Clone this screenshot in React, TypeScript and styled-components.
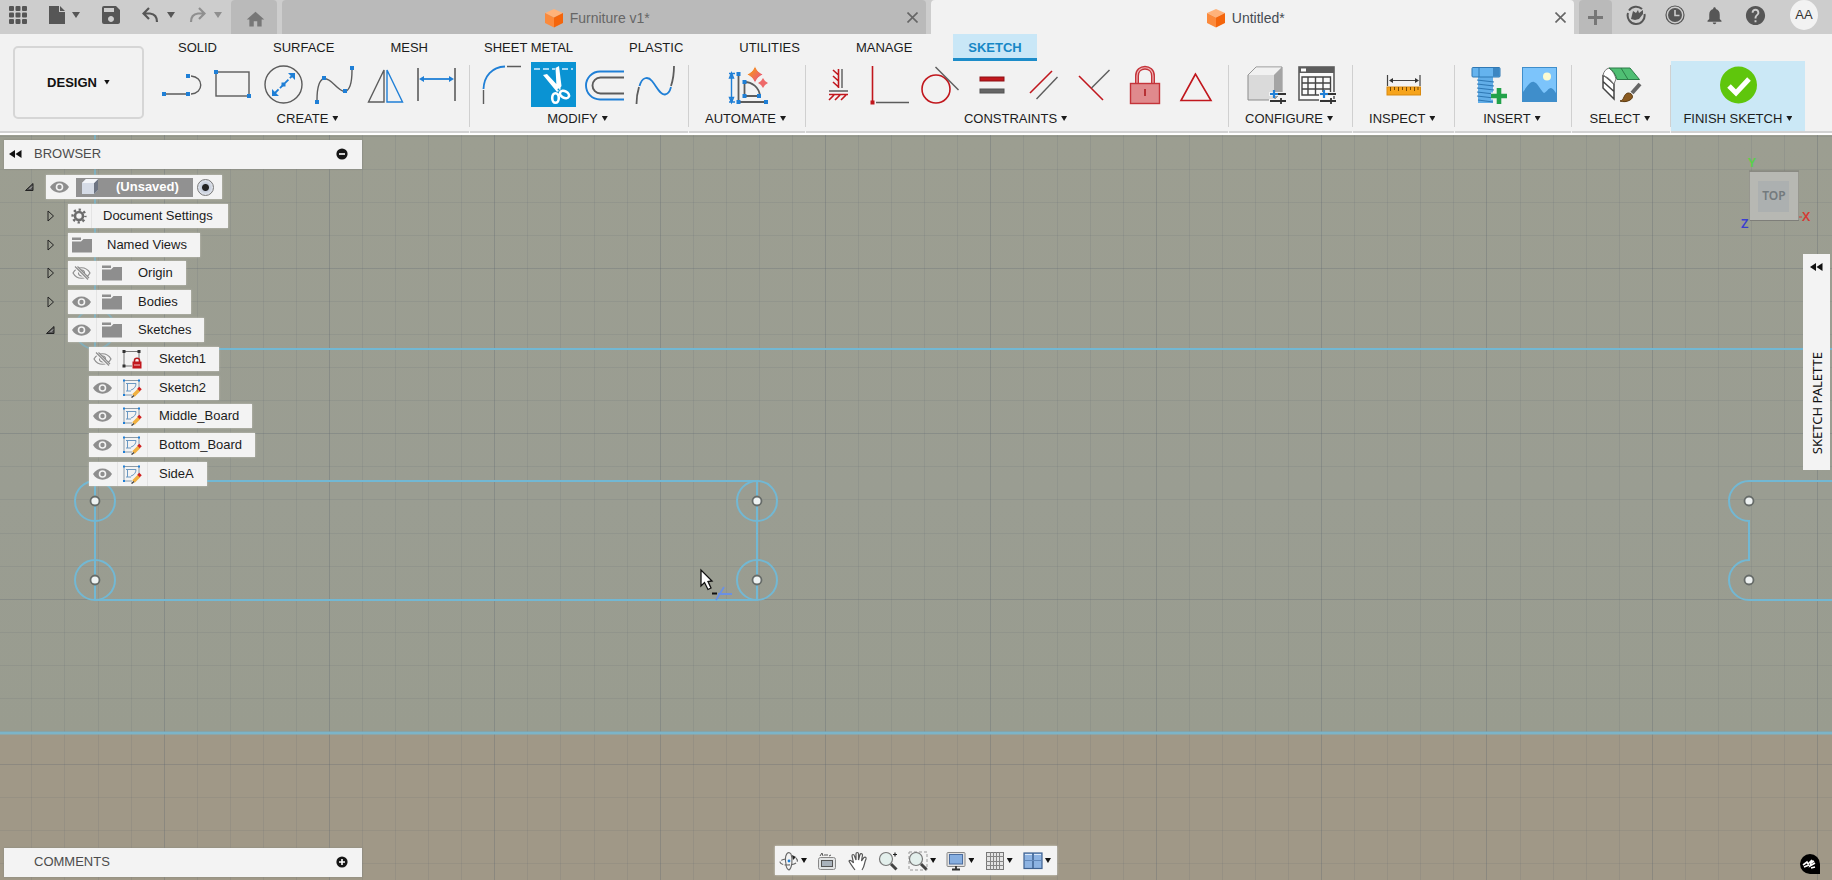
import React from "react";
import styled, { createGlobalStyle, css } from "styled-components";
import { MdHome, MdSave, MdNotifications, MdHelp } from "react-icons/md";

const GlobalStyle = createGlobalStyle`
  *, *::before, *::after { box-sizing: border-box; }
  body {
    margin: 0;
    font-family: "Liberation Sans", Arial, sans-serif;
    font-size: 13px;
    line-height: 16px;
    color: #1c1c1c;
    background: #f2f2f2;
  }
  ul { list-style: none; margin: 0; padding: 0; }
  button { font: inherit; color: inherit; background: none; border: 0; padding: 0; cursor: pointer; }
`;

const BLUE = "#1f7fd6";
const RED = "#c1171d";
const GRAY = "#5c5c5c";

/* ---------- page frame ---------- */

const Page = styled.div`
  display: flex;
  flex-direction: column;
  min-height: 100vh;
`;

const TopBar = styled.header`
  display: flex;
  height: 34px;
  background: #cdcdcd;
  color: #5b5b5b;
`;

const QuickActions = styled.div`
  display: flex;
  align-items: center;
  gap: 22px;
  width: 231px;
  padding: 0 0 4px 8px;
`;

const History = styled.div`
  display: flex;
  gap: 14px;
`;

const QuickButton = styled.button<{ $muted?: boolean }>`
  display: flex;
  align-items: center;
  gap: 6px;
  color: ${(p) => (p.$muted ? "#8f8f8f" : "#565656")};
  svg { display: block; }
`;

const TabStrip = styled.nav`
  display: flex;
  flex: 1;
  gap: 5px;
`;

const HomeTab = styled.button`
  display: flex;
  align-items: center;
  justify-content: center;
  width: 46px;
  padding: 4px 0 0 3px;
  border-radius: 4px 4px 0 0;
  background: #bababa;
  color: #777;
`;

const DocTab = styled.div<{ $active?: boolean }>`
  display: flex;
  flex: 1;
  align-items: center;
  padding: 0 8px 0 6px;
  border-radius: 4px 4px 0 0;
  background: ${(p) => (p.$active ? "#f2f2f2" : "#bababa")};
  color: ${(p) => (p.$active ? "#454b52" : "#666")};
  font-size: 14px;
`;

const DocTitle = styled.button`
  display: flex;
  flex: 1;
  align-items: center;
  justify-content: center;
  gap: 7px;
  padding-top: 2px;
`;

const CloseButton = styled.button`
  display: flex;
  width: 11px;
  height: 11px;
  color: #666;
`;

const AddTab = styled.button`
  display: flex;
  align-items: center;
  justify-content: center;
  width: 33px;
  border-radius: 4px 4px 0 0;
  background: #bababa;
  color: #777;
`;

const AccountBar = styled.div`
  display: flex;
  align-items: center;
  gap: 19px;
  width: 220px;
  padding: 0 14px 4px;
`;

const Avatar = styled.button`
  width: 30px;
  height: 30px;
  margin-left: 4px;
  border-radius: 50%;
  background: #f2f2f2;
  color: #333;
`;

/* ---------- ribbon ---------- */

const Ribbon = styled.section`
  display: flex;
  height: 101px;
  padding-left: 13px;
  background: #f2f2f2;
  border-bottom: 2px solid #fff;
  box-shadow: inset 0 -2px 0 #d2d2d2;
`;

const WorkspaceButton = styled.button`
  width: 131px;
  height: 73px;
  margin-top: 12px;
  border: 2px solid #d6d6d6;
  border-radius: 5px;
  font-weight: bold;
  color: #111;
`;

const RibbonBody = styled.div`
  display: flex;
  flex-direction: column;
  flex: 1;
  padding-left: 5px;
`;

const RibbonTabs = styled.nav`
  display: flex;
  gap: 26px;
  height: 27px;
  padding-left: 14px;
`;

const RibbonTab = styled.button<{ $active?: boolean }>`
  padding: 0 15px;
  white-space: nowrap;
  ${(p) =>
    p.$active &&
    css`
      background: #c9e7f7;
      box-shadow: inset 0 -3px 0 #1c8cc9;
      color: #1787c6;
      font-weight: bold;
    `}
`;

const ToolGroups = styled.div`
  display: flex;
  flex: 1;
`;

const Group = styled.div<{ $highlight?: boolean }>`
  display: flex;
  flex-direction: column;
  align-items: center;
  min-width: 99px;
  padding-top: 1px;
  ${(p) =>
    p.$highlight
      ? css`
          margin-bottom: 2px;
          background: #cbe8f6;
        `
      : css`
          border-right: 1px solid transparent;
          border-image: linear-gradient(#f2f2f2 5px, #d0d0d0 5px, #d0d0d0 65px, #f2f2f2 65px) 1;
        `}
`;

const GroupTools = styled.div`
  display: flex;
  padding: 0 7px;
`;

const Tool = styled.button<{ $active?: boolean }>`
  width: 45px;
  height: 45px;
  margin: 0 3px;
  background: ${(p) => (p.$active ? "#0a93d3" : "none")};
  svg { display: block; }
`;

const GroupLabel = styled.button<{ $tight?: boolean }>`
  padding: ${(p) => (p.$tight ? "4px 13px 0 12px" : "4px 19px 0 16px")};
  white-space: nowrap;
`;

const Caret = styled.span<{ $gap?: number; $large?: boolean }>`
  display: inline-block;
  width: ${(p) => (p.$large ? 8 : 6)}px;
  height: ${(p) => (p.$large ? 6 : 5)}px;
  margin-left: ${(p) => p.$gap ?? 4}px;
  vertical-align: 2px;
  background: currentColor;
  clip-path: polygon(0 0, 100% 0, 50% 100%);
`;

/* ---------- canvas ---------- */

const Stage = styled.main`
  position: relative;
  flex: 1;
  min-height: 500px;
  overflow: hidden;
  background: #9c9e90;
`;

const Drawing = styled.svg`
  position: absolute;
  inset: 0;
  width: 100%;
  height: 100%;
`;

const Panel = styled.section`
  position: absolute;
  left: 4px;
  width: 358px;
`;

const BrowserPanel = styled(Panel)`
  top: 5px;
`;

const CommentsPanel = styled(Panel)`
  bottom: 3px;
`;

const PanelHeader = styled.div`
  display: flex;
  align-items: center;
  height: 29px;
  padding: 0 14px 1px 5px;
  background: #f3f3f3;
  box-shadow: 0 0 2px #8a8a80;
  color: #4c4c4c;
  h2 { flex: 1; margin: 0; font-size: 13px; font-weight: normal; }
  svg { display: block; }
`;

const HeaderSlot = styled.span`
  width: 25px;
`;

const Tree = styled.ul`
  display: grid;
  grid-auto-rows: 1fr;
  height: 315px;
  margin-top: 4px;
`;

const levelIndent = [20, 41, 41];

const TreeItem = styled.li<{ $level: number }>`
  display: flex;
  align-items: center;
  padding-left: ${(p) => levelIndent[p.$level]}px;
`;

const Expander = styled.span<{ $level: number }>`
  display: flex;
  width: ${(p) => (p.$level === 2 ? 44 : p.$level === 1 ? 23 : 22)}px;
`;

const TreeBox = styled.div<{ $end: number }>`
  display: flex;
  align-items: center;
  height: 24px;
  padding-right: ${(p) => p.$end}px;
  background: #f3f3f3;
  box-shadow: 0 0 2px #c4c4bc;
  white-space: nowrap;
`;

const TreeCell = styled.button<{ $w: number; $line?: boolean }>`
  display: flex;
  align-items: center;
  justify-content: center;
  width: ${(p) => p.$w}px;
  height: 24px;
  padding-right: 1px;
  border-right: ${(p) => (p.$line ? "1px solid #e4e4e4" : "0")};
  svg { display: block; }
`;

const TreeText = styled.span<{ $gap: number }>`
  padding-left: ${(p) => p.$gap}px;
`;

const RootName = styled.span`
  display: flex;
  align-items: center;
  gap: 18px;
  height: 19px;
  margin: 0 4px 0 3px;
  padding: 0 14px 0 6px;
  background: #919191;
  color: #fff;
  font-weight: bold;
`;

const ActiveRadio = styled.input`
  appearance: none;
  width: 17px;
  height: 17px;
  margin: 0;
  border: 1px solid #777;
  border-radius: 50%;
  background: radial-gradient(circle, #222 0 3px, #c3cbd9 4px, #e6e9ef 8px);
`;

const ViewCube = styled.svg`
  position: absolute;
  top: 15px;
  right: 16px;
  width: 80px;
  height: 90px;
`;

const Palette = styled.button`
  position: absolute;
  top: 119px;
  right: 2px;
  display: flex;
  flex-direction: column;
  align-items: center;
  justify-content: space-between;
  width: 27px;
  height: 216px;
  padding: 9px 0 16px;
  background: #f3f3f3;
`;

const PaletteText = styled.span`
  writing-mode: vertical-rl;
  rotate: 180deg;
  font-family: "Noto Sans", sans-serif;
  font-size: 13px;
  line-height: 18px;
  color: #111;
`;

const NavBar = styled.div`
  position: absolute;
  bottom: 5px;
  left: 50%;
  translate: -50% 0;
  display: flex;
  align-items: center;
  justify-content: space-between;
  width: 282px;
  height: 29px;
  padding: 0 6px 0 4px;
  background: #f3f3f3;
  box-shadow: 0 0 2px #d8d8d0;
`;

const NavButton = styled.button`
  display: flex;
  align-items: center;
  color: #111;
  svg { display: block; }
`;

const Assistant = styled.button`
  position: absolute;
  right: 12px;
  bottom: 6px;
  width: 20px;
  height: 20px;
  border-radius: 10px 10px 0 10px;
  background: #000;
  svg { display: block; }
`;

/* ---------- toolbar drawings, 45 x 45 each ---------- */

const Art = ({ children }: { children: React.ReactNode }) => (
  <svg width="45" height="45" viewBox="0 0 45 45" fill="none" stroke={GRAY} strokeWidth="1.4" aria-hidden="true">
    {children}
  </svg>
);

const Dots = ({ at, size = 4 }: { at: [number, number][]; size?: number }) => (
  <g fill={BLUE} stroke="none">
    {at.map(([x, y]) => (
      <rect key={`${x}-${y}`} x={x - size / 2} y={y - size / 2} width={size} height={size} />
    ))}
  </g>
);

const Sliders = ({ x, y }: { x: number; y: number }) => (
  <g transform={`translate(${x} ${y})`}>
    <path d="M-1 0H17M-1 7H17" stroke="#f2f2f2" strokeWidth="4" />
    <path d="M0 0H16M0 7H16M11 4V10" stroke="#333" strokeWidth="1.8" />
    <path d="M4 -4V4M0 0H8" stroke={BLUE} strokeWidth="2.2" />
  </g>
);

const art: Record<string, React.ReactNode> = {
  Line: (
    <>
      <path d="M5 32H29M32 14C45 15 45 31 32 32" />
      <Dots at={[[5, 32], [29, 32], [29, 14]]} />
    </>
  ),
  Rectangle: (
    <>
      <rect x="6" y="10" width="33" height="24" />
      <Dots at={[[6, 10], [39, 34]]} />
    </>
  ),
  Circle: (
    <>
      <circle cx="22.5" cy="22.5" r="18.5" />
      <path d="M14 31L31 14" stroke={BLUE} strokeWidth="1.8" strokeDasharray="5 2" />
      <path d="M34 11V18L27 11ZM11 34V27L18 34Z" fill={BLUE} stroke="none" />
      <Dots at={[[22.5, 22.5]]} />
    </>
  ),
  Spline: (
    <>
      <path d="M5 38C5 27 7 18 12 16.500C20 16 25 29 33 29.500C39 28 40 18 40 8" />
      <Dots at={[[5, 40], [12, 16], [33, 29], [40, 6]]} />
    </>
  ),
  Mirror: (
    <>
      <path d="M21 8V40H5.500Z" />
      <path d="M24 8V40H39.500Z" stroke={BLUE} />
    </>
  ),
  Dimension: (
    <>
      <path d="M4 6V39M41 6V39" strokeWidth="1.6" />
      <path d="M8 17H37" stroke={BLUE} strokeWidth="1.8" />
      <path d="M5 17L10 14V20ZM40 17L35 14V20Z" fill={BLUE} stroke="none" />
    </>
  ),
  Fillet: (
    <>
      <path d="M3.500 28V42M27 4.500H41" />
      <path d="M3.500 27C4 14 12 5 25 4.500" stroke={BLUE} strokeWidth="1.8" />
    </>
  ),
  Trim: (
    <>
      <path d="M3 7H24M31 7H42" stroke="#d8efff" strokeWidth="1.4" strokeDasharray="6 3" />
      <path d="M12 13L16 12L30 27L26 30ZM24.500 6L28 4L30.500 24L27 30L25.500 25Z" fill="#fff" stroke="none" />
      <ellipse cx="24.500" cy="36" rx="3.300" ry="4.800" stroke="#fff" strokeWidth="2.600" />
      <ellipse cx="33.500" cy="32.500" rx="4.800" ry="3.300" transform="rotate(28 33.5 32.5)" stroke="#fff" strokeWidth="2.600" />
      <circle cx="27.500" cy="27.500" r="1" fill="#0a93d3" stroke="none" />
    </>
  ),
  Offset: (
    <>
      <path d="M42 9.500H18A14 14 0 0 0 18 37.500H42" stroke={BLUE} strokeWidth="1.900" />
      <path d="M42 15.500H18.500A8 8 0 0 0 18.500 31.500H42" strokeWidth="1.900" />
    </>
  ),
  "Fit Curve": (
    <>
      <path d="M3.500 42C3.500 35 4.500 30 6 25M38 24C40 18 41 12 41 4" strokeWidth="1.800" />
      <path d="M6.500 24C9 15 15 14 19 19C24 25 27 33 32 32.500C35 32 37 29 38 25" stroke={BLUE} strokeWidth="1.800" />
    </>
  ),
  Automate: (
    <>
      <defs>
        <linearGradient id="spark" x1="0" y1="0" x2="1" y2="1">
          <stop offset="0.300" stopColor="#f58a2c" />
          <stop offset="1" stopColor="#e4459a" />
        </linearGradient>
      </defs>
      <path d="M13.500 12V40H41M19.500 20V34H35C34 25 27 20 19.500 20" strokeWidth="1.800" />
      <path d="M6.500 13V39M4 11.500H10M4 40H10M6.500 11L4.500 16H8.500ZM6.500 40.500L4.500 35.500H8.500Z" stroke={BLUE} />
      <Dots at={[[13.5, 12], [13.5, 40], [41, 40], [19.5, 20], [19.5, 34], [34, 34]]} />
      <path d="M30 4Q32 10 38 12.500Q32 15 30 21Q28 15 22 12.500Q28 10 30 4Z" fill="url(#spark)" stroke="#f2f2f2" strokeWidth="0.800" />
      <path d="M38 16Q39.500 19.500 43 21Q39.500 22.500 38 26Q36.500 22.500 33 21Q36.500 19.500 38 16Z" fill="#ee6a6a" stroke="none" />
    </>
  ),
  "Horizontal/Vertical": (
    <>
      <path d="M26 7V26M13 29H32" />
      <path d="M22.500 7V26M22.500 13L17 8M22.500 19L17 14M22.500 25L17 20M13 32.500H32M18 33L13 38M24 33L19 38M30 33L25 38" stroke={RED} strokeWidth="1.600" />
    </>
  ),
  Coincident: (
    <>
      <path d="M5.500 4V39" stroke={RED} strokeWidth="1.600" />
      <path d="M9 40.500H42" strokeWidth="1.600" />
      <rect x="3.500" y="38.500" width="4" height="4" fill={RED} stroke="none" />
    </>
  ),
  Tangent: (
    <>
      <circle cx="18" cy="27" r="14" stroke={RED} strokeWidth="1.600" />
      <path d="M17.500 5L40.500 28" />
    </>
  ),
  Equal: (
    <>
      <rect x="11" y="15" width="24" height="4" fill={RED} stroke="#8d1014" strokeWidth="1" />
      <rect x="11" y="27" width="24" height="4" fill="#666" stroke="#555" strokeWidth="1" />
    </>
  ),
  Parallel: (
    <>
      <path d="M10 31L32 9" stroke={RED} strokeWidth="1.600" />
      <path d="M16.500 37L37.500 15" />
    </>
  ),
  Perpendicular: (
    <>
      <path d="M8 14L32 38" stroke={RED} strokeWidth="1.600" />
      <path d="M20.500 26L38.500 8" />
    </>
  ),
  Fix: (
    <>
      <path d="M15 21V14C15 3 31 3 31 14V21" stroke="#c4343a" strokeWidth="4" />
      <path d="M15 21V14C15 3 31 3 31 14V21" stroke="#f1b6b8" strokeWidth="1.200" />
      <rect x="8.500" y="21.500" width="29" height="20" fill="#e08a8d" stroke="#c4343a" />
      <path d="M23 27V34" stroke="#b3272c" strokeWidth="1.800" />
    </>
  ),
  Midpoint: <path d="M22.500 12L8 38.500H38Z" stroke={RED} strokeWidth="1.600" />,
  Configuration: (
    <>
      <path d="M5 13L13 5H39V30L31 38H5Z" fill="#dadada" stroke="#8b8b8b" strokeWidth="1" />
      <path d="M5.500 13L13 5.500H38.500L31 13Z" fill="#f1f1f1" stroke="none" />
      <path d="M31 13L39 5V30L31 38Z" fill="#a4a4a4" stroke="none" />
      <Sliders x={27} y={32} />
    </>
  ),
  "Configuration Table": (
    <>
      <rect x="5" y="5" width="35" height="33" fill="#fafafa" strokeWidth="1.600" />
      <rect x="5" y="5" width="35" height="6" fill="#5c5c5c" stroke="none" />
      <rect x="7" y="6.500" width="5" height="3" fill="#fff" stroke="none" />
      <path d="M8 15H36.500V33H8ZM8 21H36M8 27H36M14 15V33M21.500 15V33M29 15V33" stroke="#444" />
      <Sliders x={26} y={32} />
    </>
  ),
  Measure: (
    <>
      <path d="M6.500 13V24M39 13V24M10 18.500H36" stroke="#444" strokeWidth="1.200" />
      <path d="M8 18.500L12 16V21ZM38 18.500L34 16V21Z" fill="#333" stroke="none" />
      <rect x="6" y="25" width="33.500" height="8" fill="#f6a41c" stroke="#d98a10" strokeWidth="1" />
      <path d="M9.500 25V29M13.500 25V28M17.500 25V29M21.500 25V28M25.500 25V29M29.500 25V28M33.500 25V29M37 25V28" stroke="#7a4a00" strokeWidth="1" />
    </>
  ),
  "Insert Fastener": (
    <>
      <rect x="13" y="15" width="15" height="26" fill="#62aee8" stroke="none" />
      <path d="M12 18L29 20M12 22L29 24M12 26L29 28M12 30L29 32M12 34L29 36M13 38L28 40" stroke="#2f78b4" strokeWidth="1.200" />
      <rect x="7" y="5.500" width="28" height="9.500" rx="1" fill="#65b3ee" stroke="#2f78b4" strokeWidth="1" />
      <path d="M14 6V15" stroke="#2f78b4" strokeWidth="1" />
      <rect x="28" y="6" width="6.500" height="8.500" fill="#3c86c2" stroke="none" />
      <path d="M34 25.500V42M26 34H42.500" stroke="#f2f2f2" strokeWidth="7" />
      <path d="M34 26V42M26 34H42" stroke="#23a24a" strokeWidth="4.600" />
    </>
  ),
  "Insert Image": (
    <>
      <rect x="6.500" y="5.500" width="34" height="34" fill="#7cc4fb" stroke="#3f8ecb" strokeWidth="1" />
      <path d="M7 30C12 23 15 19 18 20C22 21 25 29 28 31C31 30 32 26 35 26C38 27 39 30 40 31V39H7Z" fill="#3f8ecb" stroke="none" />
      <circle cx="31" cy="14.500" r="4" fill="#fbfbd2" stroke="none" />
    </>
  ),
  Select: (
    <>
      <path d="M3.500 14L12 6L16 17V37L3.500 26Z" fill="#fff" stroke="none" />
      <path d="M4 13V26L15 37V22C11 18 8 15 4 13M4 19.500L15 29.500" strokeWidth="1.500" stroke="#444" />
      <path d="M4 13C5 9 7 7 10 6C14 9 16 13 17 17L15 22Q11 16 4 13Z" fill="#fff" stroke="#777" strokeWidth="1" />
      <path d="M10 6H31L40.500 17.500H18C17 13 14 8 10 6Z" fill="#4fbf73" stroke="#2c7d48" strokeWidth="1" />
      <path d="M22 6L29 17.500" stroke="#2c7d48" strokeWidth="1" />
      <path d="M41 22L33 31" stroke="#666" strokeWidth="4" />
      <path d="M21 39C26 38 24 32 29 31C34 31 35 36 31 38C28 40 24 40 21 39Z" fill="#8a5a20" stroke="#5c3a10" strokeWidth="1" />
    </>
  ),
  "Finish Sketch": (
    <>
      <circle cx="22.500" cy="23" r="18.500" fill="#5fc60c" stroke="none" />
      <path d="M13 24L20 31L33 17" stroke="#fff" strokeWidth="5" />
    </>
  ),
};

const groups: { label: string; tools: string[]; highlight?: boolean }[] = [
  { label: "CREATE", tools: ["Line", "Rectangle", "Circle", "Spline", "Mirror", "Dimension"] },
  { label: "MODIFY", tools: ["Fillet", "Trim", "Offset", "Fit Curve"] },
  { label: "AUTOMATE", tools: ["Automate"] },
  {
    label: "CONSTRAINTS",
    tools: ["Horizontal/Vertical", "Coincident", "Tangent", "Equal", "Parallel", "Perpendicular", "Fix", "Midpoint"],
  },
  { label: "CONFIGURE", tools: ["Configuration", "Configuration Table"] },
  { label: "INSPECT", tools: ["Measure"] },
  { label: "INSERT", tools: ["Insert Fastener", "Insert Image"] },
  { label: "SELECT", tools: ["Select"] },
  { label: "FINISH SKETCH", tools: ["Finish Sketch"], highlight: true },
];

/* ---------- small icons ---------- */

const BodyCube = () => (
  <svg width="18" height="20" viewBox="0 0 18 20" aria-hidden="true">
    <path d="M9 1L18 5L9 9.500L0 5Z" fill="#ffb27a" />
    <path d="M0 5L9 9.500V19.500L0 15Z" fill="#fb8a3c" />
    <path d="M18 5L9 9.500V19.500L18 15Z" fill="#f4650c" />
  </svg>
);

const Cross = () => (
  <svg width="11" height="11" viewBox="0 0 11 11" stroke="currentColor" strokeWidth="1.600" aria-hidden="true">
    <path d="M0.500 0.500L10.500 10.500M10.500 0.500L0.500 10.500" />
  </svg>
);

const Eye = () => (
  <svg width="19" height="12" viewBox="0 0 19 12" aria-hidden="true">
    <path d="M0 6C4 -1.500 15 -1.500 19 6C15 13.500 4 13.500 0 6Z" fill="#8e8e8e" />
    <circle cx="9.500" cy="6" r="3.800" fill="#f3f3f3" />
    <circle cx="9.500" cy="6" r="2.200" fill="#8e8e8e" />
  </svg>
);

const EyeOff = () => (
  <svg width="19" height="14" viewBox="0 0 19 14" fill="none" stroke="#8e8e8e" strokeWidth="1.200" aria-hidden="true">
    <path d="M1 7C5 0 14 0 18 7C14 14 5 14 1 7Z" />
    <circle cx="9.500" cy="7" r="3" />
    <path d="M3 0.500L16 13.500" stroke="#f3f3f3" strokeWidth="3.500" />
    <path d="M3 0.500L16 13.500M5.500 0.500L17 12" />
  </svg>
);

const Folder = () => (
  <svg width="20" height="16" viewBox="0 0 20 16" aria-hidden="true">
    <path d="M0 0.500H9V3H0ZM0 4.500H9L11.500 2H20V15.500H0Z" fill="#8e8e8e" />
  </svg>
);

const Gear = () => (
  <svg width="16" height="16" viewBox="0 0 16 16" fill="none" stroke="#6c6c6c" aria-hidden="true">
    <circle cx="8" cy="8" r="4" strokeWidth="2.600" />
    <circle cx="8" cy="8" r="6.400" strokeWidth="2.400" strokeDasharray="2.300 2.726" strokeDashoffset="1.150" />
  </svg>
);

const SketchIcon = ({ locked }: { locked?: boolean }) => (
  <svg width="20" height="20" viewBox="0 0 20 20" fill="none" aria-hidden="true">
    <path d="M2 2.500H17M2 2.500V17M17 2.500V10M2 17H10" stroke={locked ? "#777" : "#8a9aa8"} />
    {locked ? (
      <>
        <path d="M0.500 1H3.500V4H0.500ZM15.500 1H18.500V4H15.500ZM0.500 15.500H3.500V18.500H0.500Z" fill="#333" />
        <path d="M12.500 13V11.500C12.500 8.500 17.500 8.500 17.500 11.500V13" stroke="#b3171b" strokeWidth="1.600" />
        <rect x="10.500" y="12.500" width="9" height="7" fill="#c1171d" />
        <path d="M12 16H18" stroke="#f3c0c0" />
      </>
    ) : (
      <>
        <path d="M5.500 5.500V13M4 5.500H14M4 13H9M14 5.500C14 9 12 11 9 12" stroke="#6a98c2" />
        <Dots size={2} at={[[2, 2.5], [17, 2.5], [2, 17]]} />
        <path d="M11.500 17.500L17 12" stroke="#f0b040" strokeWidth="3.600" />
        <path d="M16.500 12L18.500 10" stroke="#d02020" strokeWidth="3.600" />
        <path d="M9.500 19.500L12 17.500" stroke="#444" strokeWidth="1.500" />
      </>
    )}
  </svg>
);

const DoubleLeft = () => (
  <svg width="13" height="8" viewBox="0 0 13 8" fill="#111" aria-hidden="true">
    <path d="M6 0V8L0 4ZM12.500 0V8L6.500 4Z" />
  </svg>
);

const RoundSign = ({ plus }: { plus?: boolean }) => (
  <svg width="12" height="12" viewBox="0 0 12 12" aria-hidden="true">
    <circle cx="6" cy="6" r="5.600" fill="#161616" />
    <path d={plus ? "M3 6H9M6 3V9" : "M3 6H9"} stroke="#fff" strokeWidth="1.600" />
  </svg>
);

const Arrow = ({ open }: { open: boolean }) => (
  <svg width="10" height="12" viewBox="0 0 10 12" fill="none" stroke="#222" aria-hidden="true">
    {open ? (
      <>
        <path d="M9 2.500V9.500H1.500Z" fill="#555" />
        <path d="M5.500 8L8 5.500" stroke="#bbb" />
      </>
    ) : (
      <path d="M3 1V11L8.500 6Z" />
    )}
  </svg>
);

/* ---------- browser tree ---------- */

type Node = {
  name: string;
  level: 1 | 2;
  open?: boolean;
  icon: "gear" | "folder" | "sketch" | "locked";
  eye?: "on" | "off";
};

const nodes: Node[] = [
  { name: "Document Settings", level: 1, icon: "gear" },
  { name: "Named Views", level: 1, icon: "folder" },
  { name: "Origin", level: 1, icon: "folder", eye: "off" },
  { name: "Bodies", level: 1, icon: "folder", eye: "on" },
  { name: "Sketches", level: 1, icon: "folder", eye: "on", open: true },
  { name: "Sketch1", level: 2, icon: "locked", eye: "off" },
  { name: "Sketch2", level: 2, icon: "sketch", eye: "on" },
  { name: "Middle_Board", level: 2, icon: "sketch", eye: "on" },
  { name: "Bottom_Board", level: 2, icon: "sketch", eye: "on" },
  { name: "SideA", level: 2, icon: "sketch", eye: "on" },
];

const TreeRow = ({ node }: { node: Node }) => {
  const glyph = {
    gear: <Gear />,
    folder: <Folder />,
    sketch: <SketchIcon />,
    locked: <SketchIcon locked />,
  }[node.icon];
  const iconWidth = node.icon === "gear" ? 24 : node.eye ? 30 : 28;
  return (
    <TreeItem $level={node.level}>
      <Expander $level={node.level}>{node.level === 1 && <Arrow open={!!node.open} />}</Expander>
      <TreeBox $end={node.icon === "gear" ? 15 : 13}>
        {node.eye && (
          <TreeCell $w={29} $line aria-label={`Toggle ${node.name}`}>
            {node.eye === "on" ? <Eye /> : <EyeOff />}
          </TreeCell>
        )}
        <TreeCell as="span" $w={iconWidth} $line={node.icon !== "folder"}>
          {glyph}
        </TreeCell>
        <TreeText $gap={node.icon === "folder" && !node.eye ? 11 : 11}>{node.name}</TreeText>
      </TreeBox>
    </TreeItem>
  );
};

/* ---------- sketch geometry ---------- */

const GRID = 33.07;
const gridColumns = Array.from({ length: 130 }, (_, i) => ({
  at: Math.round(329 + (i - 10) * GRID) + 0.5,
  major: i % 5 === 0,
}));
const gridRows = Array.from({ length: 80 }, (_, i) => ({
  at: Math.round(629 + (i - 20) * GRID) + 0.5,
  major: i % 5 === 0,
}));
const holes = [
  [95, 366],
  [95, 445],
  [757, 366],
  [757, 445],
];

const SketchDrawing = () => (
  <Drawing aria-hidden="true">
    <defs>
      <linearGradient id="floor" x1="0" y1="0" x2="0" y2="1">
        <stop offset="0" stopColor="#9c9e91" />
        <stop offset="0.600" stopColor="#9a9d92" />
        <stop offset="1" stopColor="#999c8f" />
      </linearGradient>
    </defs>
    <rect width="100%" height="598" fill="url(#floor)" />
    <rect y="598" width="100%" height="100%" fill="#a09887" />
    <g stroke="#5d6670">
      {gridColumns.map((c) => (
        <line key={c.at} x1={c.at} x2={c.at} y1="0" y2="100%" opacity={c.major ? 0.3 : 0.14} />
      ))}
      {gridRows.map((r) => (
        <line key={r.at} y1={r.at} y2={r.at} x1="0" x2="100%" opacity={r.major ? 0.28 : 0.13} />
      ))}
    </g>
    <g fill="none" stroke="#72b8d4" strokeWidth="2">
      <path d="M95 0V214" opacity="0.700" />
      <circle cx="95" cy="194" r="20" opacity="0.600" />
      <line x1="95" x2="100%" y1="214" y2="214" />
      <line x1="0" x2="100%" y1="598" y2="598" strokeWidth="3" stroke="#7cb4c8" />
      <rect x="95" y="346" width="662" height="119" />
      {holes.map(([x, y]) => (
        <circle key={`${x}-${y}`} cx={x} cy={y} r="20" />
      ))}
      <path d="M6000 346H1749A20 20 0 0 0 1749 386V425A20 20 0 0 0 1749 465H6000" />
    </g>
    <g fill="#eef2f2" stroke="#666b68" strokeWidth="1.800">
      {[...holes, [1749, 366], [1749, 445]].map(([x, y]) => (
        <circle key={`${x}-${y}`} cx={x} cy={y} r="4.500" />
      ))}
    </g>
    <g transform="translate(700 434)">
      <path d="M1 1V17L4.500 13.500L8 20.500L11 19L8 12.500L12 12Z" fill="#fff" stroke="#111" strokeWidth="1.300" />
      <path d="M12 24.500H17" stroke="#111" strokeWidth="2" />
      <path d="M18 25H32M16 31L24 18" stroke="#6a90e4" strokeWidth="1.800" />
    </g>
  </Drawing>
);

/* ---------- navigation bar drawings ---------- */

const Glass = () => (
  <>
    <circle cx="8" cy="8" r="6.500" fill="#e3efec" stroke="#777" strokeWidth="1.200" />
    <path d="M13 13L18.500 18.500" stroke="#444" strokeWidth="3" />
  </>
);

const navTools: { name: string; menu?: boolean; drawing: React.ReactNode }[] = [
  {
    name: "Orbit",
    menu: true,
    drawing: (
      <g stroke="#666" strokeWidth="1.100">
        <path d="M7 8C-2 9 0 14 8 14C16 14 21 11 17 7" strokeDasharray="5 1.500" />
        <path d="M7 13C5 4 9 -1 12 3C14 8 13 17 10 19C8 18 7 16 7 13" />
        <path d="M13 4L17 6L14 9Z" fill="#222" stroke="none" />
        <circle cx="10" cy="10" r="1.400" fill={BLUE} stroke="none" />
      </g>
    ),
  },
  {
    name: "Look At",
    drawing: (
      <g stroke="#888">
        <path d="M3 5L5 2L6 5M8 5V3M10 5V3M12 5L14 4" stroke="#555" />
        <rect x="1.500" y="6.500" width="17" height="12" rx="2" fill="#e2e4e5" />
        <rect x="4.500" y="9.500" width="11" height="6" fill="#a9b2bb" stroke="#555" />
      </g>
    ),
  },
  {
    name: "Pan",
    drawing: (
      <path
        d="M7 19C4 15 2 12 1 10C2 8.500 4 10 5.500 12L4 5C4 3 6 3 6.500 5L8 9V3C8 1 10.500 1 10.500 3V9L12 3.500C12.500 2 14.500 2.500 14.500 4L13.500 10L16 6.500C17 5.500 18.500 6.500 18 8C16 12 17 15 14 19"
        fill="#fff"
        stroke="#555"
        strokeWidth="1.200"
      />
    ),
  },
  {
    name: "Zoom",
    drawing: (
      <>
        <Glass />
        <path d="M15 3.500H19M17 1.500V5.500" stroke="#222" strokeWidth="1.200" />
      </>
    ),
  },
  {
    name: "Fit",
    menu: true,
    drawing: (
      <>
        <rect x="1" y="1" width="18" height="18" stroke="#999" strokeDasharray="3 2" />
        <Glass />
      </>
    ),
  },
  {
    name: "Display Settings",
    menu: true,
    drawing: (
      <>
        <rect x="1" y="1.500" width="18" height="14" rx="1" fill="#e2e2e2" stroke="#888" />
        <rect x="3.500" y="3.500" width="13" height="9.500" fill="#86aee0" stroke="#4b6da0" />
        <path d="M6 18.500H14M10 15V18" stroke="#333" strokeWidth="1.800" />
      </>
    ),
  },
  {
    name: "Grid and Snaps",
    menu: true,
    drawing: (
      <>
        <rect x="1.500" y="1.500" width="17" height="17" fill="#e4e4e4" stroke="#777" />
        <path d="M5.500 1V19M14.500 1V19M1 5.500H19M1 10.500H19M1 14.500H19M8.500 1V19M11.500 1V19" stroke="#858585" />
      </>
    ),
  },
  {
    name: "Viewports",
    menu: true,
    drawing: (
      <>
        <rect x="1" y="2" width="18" height="15.500" fill="#8db3e2" stroke="#3f6291" strokeWidth="1.200" />
        <path d="M10 2V18" stroke="#3f6291" strokeWidth="1.500" />
        <path d="M2 9.500H18" stroke="#6288ba" />
        <path d="M2 3.500H9M11 3.500H18" stroke="#dbe8f8" />
      </>
    ),
  },
];

const ribbonTabs = ["SOLID", "SURFACE", "MESH", "SHEET METAL", "PLASTIC", "UTILITIES", "MANAGE", "SKETCH"];

export default function App() {
  return (
    <>
      <GlobalStyle />
      <Page>
        <TopBar>
          <QuickActions>
            <QuickButton aria-label="Data panel">
              <svg width="19" height="18" viewBox="0 0 19 18" fill="currentColor">
                {[0, 6.5, 13].map((y) =>
                  [1, 7.5, 14].map((x) => <rect key={`${x}-${y}`} x={x} y={y} width="5" height="5" rx="1" />)
                )}
              </svg>
            </QuickButton>
            <QuickButton aria-label="File">
              <svg width="16" height="20" viewBox="0 0 16 20" fill="currentColor">
                <path d="M0 1H10V7H16V19H0ZM11 1L16 6H11Z" />
              </svg>
              <Caret $gap={1} $large />
            </QuickButton>
            <QuickButton aria-label="Save">
              <svg width="18" height="18" viewBox="3 3 18 18">
                <MdSave size={24} />
              </svg>
            </QuickButton>
            <History>
              <QuickButton aria-label="Undo">
                <svg width="17" height="16" viewBox="0 0 17 16" fill="none" stroke="currentColor" strokeWidth="2.200">
                  <path d="M7 1L1.500 6.500L7 12M2 6.500H8C13 7 15 10 15 15" />
                </svg>
                <Caret $gap={2} $large />
              </QuickButton>
              <QuickButton aria-label="Redo" $muted>
                <svg width="17" height="16" viewBox="0 0 17 16" fill="none" stroke="currentColor" strokeWidth="2.200">
                  <path d="M10 1L15.500 6.500L10 12M15 6.500H9C4 7 2 10 2 15" />
                </svg>
                <Caret $gap={2} $large />
              </QuickButton>
            </History>
          </QuickActions>
          <TabStrip>
            <HomeTab aria-label="Home">
              <MdHome size={21} />
            </HomeTab>
            <DocTab>
              <DocTitle>
                <BodyCube />
                Furniture v1*
              </DocTitle>
              <CloseButton aria-label="Close Furniture v1">
                <Cross />
              </CloseButton>
            </DocTab>
            <DocTab $active>
              <DocTitle>
                <BodyCube />
                Untitled*
              </DocTitle>
              <CloseButton aria-label="Close Untitled">
                <Cross />
              </CloseButton>
            </DocTab>
            <AddTab aria-label="New design">
              <svg width="15" height="15" viewBox="0 0 15 15" stroke="currentColor" strokeWidth="3">
                <path d="M7.500 0V15M0 7.500H15" />
              </svg>
            </AddTab>
          </TabStrip>
          <AccountBar>
            <QuickButton aria-label="Extensions">
              <svg width="20" height="20" viewBox="0 0 20 20" fill="none" stroke="currentColor">
                <path d="M3 5.500A8.500 8.500 0 0 1 16 4M18.500 9A8.500 8.500 0 1 1 2 8" strokeWidth="2" />
                <path d="M5 14L7 6L10 8L12 5L13 8L17 5V9L13 14L9 15Z" fill="currentColor" stroke="none" />
              </svg>
            </QuickButton>
            <QuickButton aria-label="Job status">
              <svg width="20" height="20" viewBox="0 0 20 20" fill="none" stroke="currentColor">
                <circle cx="10" cy="10" r="9" strokeWidth="1.200" />
                <circle cx="10" cy="10" r="7" fill="currentColor" stroke="none" />
                <path d="M10 5V10.500H14.500" stroke="#cdcdcd" strokeWidth="1.600" />
              </svg>
            </QuickButton>
            <QuickButton aria-label="Notifications">
              <MdNotifications size={21} />
            </QuickButton>
            <QuickButton aria-label="Help">
              <MdHelp size={23} />
            </QuickButton>
            <Avatar>AA</Avatar>
          </AccountBar>
        </TopBar>

        <Ribbon>
          <WorkspaceButton>
            DESIGN
            <Caret $gap={7} />
          </WorkspaceButton>
          <RibbonBody>
            <RibbonTabs>
              {ribbonTabs.map((t) => (
                <RibbonTab key={t} $active={t === "SKETCH"}>
                  {t}
                </RibbonTab>
              ))}
            </RibbonTabs>
            <ToolGroups>
              {groups.map((g) => (
                <Group key={g.label} $highlight={g.highlight}>
                  <GroupTools>
                    {g.tools.map((t) => (
                      <Tool key={t} aria-label={t} $active={t === "Trim"}>
                        <Art>{art[t]}</Art>
                      </Tool>
                    ))}
                  </GroupTools>
                  <GroupLabel $tight={g.highlight}>
                    {g.label}
                    <Caret />
                  </GroupLabel>
                </Group>
              ))}
            </ToolGroups>
          </RibbonBody>
        </Ribbon>

        <Stage>
          <SketchDrawing />

          <BrowserPanel>
            <PanelHeader>
              <HeaderSlot>
                <DoubleLeft />
              </HeaderSlot>
              <h2>BROWSER</h2>
              <button aria-label="Collapse browser">
                <RoundSign />
              </button>
            </PanelHeader>
            <Tree>
              <TreeItem $level={0}>
                <Expander $level={0}>
                  <Arrow open />
                </Expander>
                <TreeBox $end={8}>
                  <TreeCell $w={27} aria-label="Toggle document">
                    <Eye />
                  </TreeCell>
                  <RootName>
                    <svg width="16" height="16" viewBox="0 0 16 16" aria-hidden="true">
                      <path d="M0 4L4 0H16V11L12 15H0Z" fill="#d5dbe6" />
                      <path d="M12 4L16 0V11L12 15Z" fill="#6d7482" />
                      <path d="M0 4L4 0H16L12 4Z" fill="#f3f5f9" />
                    </svg>
                    (Unsaved)
                  </RootName>
                  <ActiveRadio type="radio" name="component" aria-label="Activate (Unsaved)" defaultChecked />
                </TreeBox>
              </TreeItem>
              {nodes.map((n) => (
                <TreeRow key={n.name} node={n} />
              ))}
            </Tree>
          </BrowserPanel>

          <ViewCube viewBox="0 0 80 90" role="img" aria-label="View cube, top">
            <rect x="13.500" y="21.500" width="49" height="49" fill="#b7b8b3" stroke="#97978f" />
            <path d="M13 21H63M14 70.500H63" stroke="#6f6f6b" opacity="0.600" />
            <rect x="22" y="31" width="31" height="31" fill="#acb0b0" />
            <g fontFamily="Noto Sans, sans-serif" fontSize="13">
              <text x="38" y="50" textAnchor="middle" fontSize="12" fontWeight="600" fill="#737a7d">TOP</text>
              <g fontWeight="600">
                <text x="12" y="17" fill="#58d048">Y</text>
                <text x="66" y="71" fill="#d63a34">X</text>
                <text x="5" y="78" fill="#3a3fd0">Z</text>
              </g>
            </g>
            <path d="M63 67H66" stroke="#d63a34" />
          </ViewCube>

          <Palette>
            <DoubleLeft />
            <PaletteText>SKETCH PALETTE</PaletteText>
          </Palette>

          <CommentsPanel>
            <PanelHeader>
              <HeaderSlot />
              <h2>COMMENTS</h2>
              <button aria-label="Expand comments">
                <RoundSign plus />
              </button>
            </PanelHeader>
          </CommentsPanel>

          <NavBar>
            {navTools.map((t) => (
              <NavButton key={t.name} aria-label={t.name}>
                <svg width="20" height="20" viewBox="0 0 20 20" fill="none" aria-hidden="true">
                  {t.drawing}
                </svg>
                {t.menu && <Caret $gap={2} />}
              </NavButton>
            ))}
          </NavBar>

          <Assistant aria-label="Assistant">
            <svg width="20" height="20" viewBox="0 0 20 20" fill="none" stroke="#fff" strokeWidth="1.600">
              <path d="M3 11L7 8L8 10L12 6L10 12L15 9M4 13L9 11M11 14L15 13M14 7L11 9" />
            </svg>
          </Assistant>
        </Stage>
      </Page>
    </>
  );
}
